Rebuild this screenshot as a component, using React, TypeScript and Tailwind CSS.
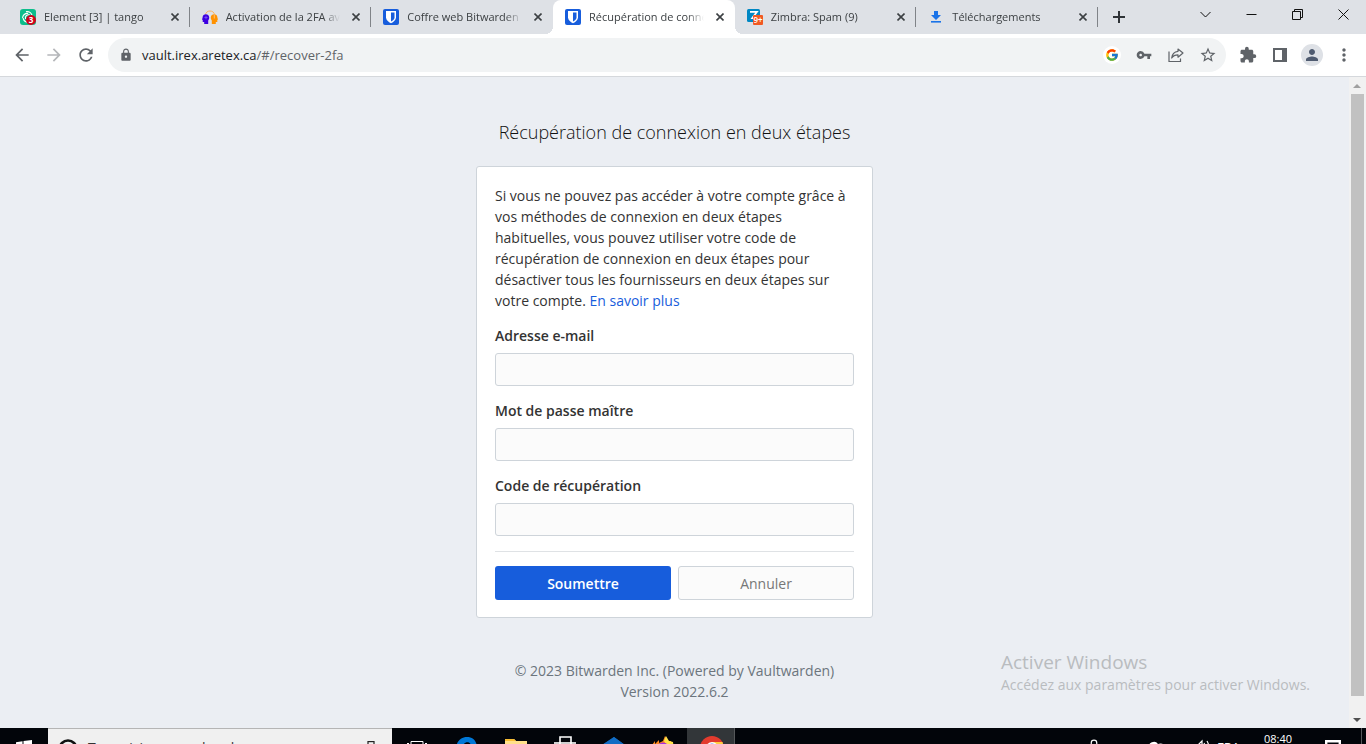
import type { ReactNode } from "react";
import { FcGoogle } from "react-icons/fc";
import {
  MdArrowBack,
  MdArrowForward,
  MdExtension,
  MdLock,
  MdMoreVert,
  MdPerson,
  MdRefresh,
  MdStarBorder,
  MdVpnKey,
} from "react-icons/md";

function ElementIcon() {
  return (
    <svg viewBox="0 0 16 16" className="size-4 shrink-0">
      <rect width="16" height="16" rx="3" fill="#0dbd8b" />
      <g fill="none" stroke="#fff" strokeWidth="1.2" strokeLinecap="round">
        <path d="M6.5 2.600a5.200 5.200 0 0 1 5.700 4.400" />
        <path d="M2.600 8.500a5.200 5.200 0 0 1 5-4.200" />
        <path d="M8 13.200a5.200 5.200 0 0 1-4.800-3.700" />
        <path d="M5.500 9.500a3 3 0 0 1 3.800-3.600" />
      </g>
      <circle cx="11" cy="11" r="5" fill="#d0021b" />
      <text x="11" y="14" textAnchor="middle" fontSize="8" fontWeight="700" fill="#fff" fontFamily="Open Sans">
        3
      </text>
    </svg>
  );
}

function HeadsIcon() {
  return (
    <svg viewBox="0 0 16 16" className="size-4 shrink-0">
      <path d="M3.500 5.600C4 0.800 12 0.800 12.500 5.600" fill="none" stroke="#ffb45c" strokeWidth="1" />
      <path d="M0.600 8.400C.6 4.300 7 4.300 7.200 8.200c.1 1.800-.6 2.600-1 3.200V15H2.200v-2H.7v-2.200H0Z" fill="#3d00e0" />
      <path d="M15.400 8.400C15.400 4.300 9 4.300 8.800 8.200c-.1 1.800.6 2.600 1 3.200V15h4v-2h1.500v-2.200h.7Z" fill="#ff9100" />
      <path d="M4 6.800v3.400M2.400 8.500h3.200" stroke="#7d5cf5" strokeWidth=".8" />
      <path d="M12.300 5.500v4" stroke="#ffc070" strokeWidth="1" />
    </svg>
  );
}

function BitwardenIcon() {
  return (
    <svg viewBox="0 0 16 16" className="size-4 shrink-0">
      <rect width="16" height="16" rx="2" fill="#175ddc" />
      <path d="M3 2h10v6.500c0 2.600-2.400 4.400-5 5.700-2.600-1.300-5-3.100-5-5.700Z" fill="#fff" />
      <path d="M8 3.500h3.500v5c0 1.600-1.500 2.900-3.500 4Z" fill="#175ddc" />
    </svg>
  );
}

function ZimbraIcon() {
  return (
    <svg viewBox="0 0 16 16" className="size-4 shrink-0">
      <rect width="13" height="13" rx="1.500" fill="#0087c3" />
      <path d="M3 2.800h7L5.200 9.200H8" fill="none" stroke="#fff" strokeWidth="1.700" />
      <rect x="6" y="6" width="10" height="10" rx="1" fill="#f15922" />
      <text x="11" y="14" textAnchor="middle" fontSize="8" fontWeight="600" fill="#fff" fontFamily="Open Sans">
        9+
      </text>
    </svg>
  );
}

function DownloadIcon() {
  return (
    <svg viewBox="0 0 16 16" className="size-4 shrink-0" fill="#1a73e8">
      <path d="M6 2h4v4h3L8 11 3 6h3Z" />
      <rect x="3" y="12" width="10" height="1.600" />
    </svg>
  );
}

type TabInfo = { title: string; icon: ReactNode; active?: boolean; divider?: boolean };

const tabs: TabInfo[] = [
  { title: "Element [3] | tango", icon: <ElementIcon />, divider: true },
  { title: "Activation de la 2FA avec", icon: <HeadsIcon />, divider: true },
  { title: "Coffre web Bitwarden", icon: <BitwardenIcon /> },
  { title: "Récupération de connexion", icon: <BitwardenIcon />, active: true },
  { title: "Zimbra: Spam (9)", icon: <ZimbraIcon />, divider: true },
  { title: "Téléchargements", icon: <DownloadIcon />, divider: true },
];

function Tab({ title, icon, active, divider }: TabInfo) {
  return (
    <div className={`relative flex h-full min-w-0 items-center pl-3 ${active ? "rounded-t-lg bg-white" : ""}`}>
      {active && (
        <>
          <span className="absolute bottom-0 -left-2 size-2 bg-[radial-gradient(circle_at_0_0,#dee1e6_8px,#fff_8px)]" />
          <span className="absolute -right-2 bottom-0 size-2 bg-[radial-gradient(circle_at_100%_0,#dee1e6_8px,#fff_8px)]" />
        </>
      )}
      {icon}
      <span className="mx-2 flex-1 overflow-hidden whitespace-nowrap [mask-image:linear-gradient(to_right,#000_85%,transparent)]">
        {title}
      </span>
      <button type="button" aria-label="Fermer l’onglet" className="flex size-4 shrink-0 items-center justify-center">
        <svg viewBox="0 0 8 8" className="size-2" stroke="#3c4043" strokeWidth="1.600">
          <path d="M.5.5l7 7M7.500.5l-7 7" />
        </svg>
      </button>
      <span className={`ml-1.5 h-5 w-px ${divider ? "bg-[#808388]" : ""}`} />
    </div>
  );
}

function WindowButton({ label, children }: { label: string; children: ReactNode }) {
  return (
    <button type="button" aria-label={label} className="flex h-7 w-[46px] items-center justify-center">
      <svg viewBox="0 0 11 11" className="size-[11px]" fill="none" stroke="#111" strokeWidth="1">
        {children}
      </svg>
    </button>
  );
}

function ToolButton({ label, children }: { label: string; children: ReactNode }) {
  return (
    <button type="button" aria-label={label} className="flex size-8 shrink-0 items-center justify-center text-[#5f6368]">
      {children}
    </button>
  );
}

function Field({ id, label, type }: { id: string; label: string; type: string }) {
  return (
    <div className="mb-3.5">
      <label htmlFor={id} className="mb-[7px] block font-semibold">
        {label}
      </label>
      <input
        id={id}
        type={type}
        className="block h-[33px] w-full rounded-[3px] border border-[#ced4da] bg-[#fbfbfb] px-3 outline-none"
      />
    </div>
  );
}

function TaskSlot({ active, children }: { active?: boolean; children: ReactNode }) {
  return (
    <div className={`flex h-10 w-12 shrink-0 items-center justify-center ${active ? "border-r border-[#55585a] bg-[#323639]" : ""}`}>
      <svg viewBox="0 0 24 24" className="size-6">
        {children}
      </svg>
    </div>
  );
}

export default function App() {
  return (
    <div className="flex min-h-screen flex-col bg-[#ebeef3] font-['Open_Sans',sans-serif] text-sm/[21px] text-[#333]">
      <header>
        <div className="flex h-[34px] bg-[#dee1e6] text-[11px]/[18px] text-[#3c4043]">
          <div className="ml-2 grid w-[1090px] min-w-0 grid-cols-6">
            {tabs.map((tab) => (
              <Tab key={tab.title} {...tab} />
            ))}
          </div>
          <button type="button" aria-label="Nouvel onglet" className="ml-[15px] flex h-full items-center">
            <svg viewBox="0 0 12 12" className="size-3" stroke="#2f3337" strokeWidth="2">
              <path d="M6 0v12M0 6h12" />
            </svg>
          </button>
          <div className="ml-auto flex">
            <WindowButton label="Rechercher des onglets">
              <path d="M.5 3l5 5 5-5" />
            </WindowButton>
            <WindowButton label="Réduire">
              <path d="M.5 5.500h10" />
            </WindowButton>
            <WindowButton label="Restaurer">
              <path d="M.5 2.500h8v8h-8ZM2.500 2.500v-2h8v8h-2" />
            </WindowButton>
            <WindowButton label="Fermer">
              <path d="M.5.5l10 10M10.500.5l-10 10" />
            </WindowButton>
          </div>
        </div>

        <div className="flex h-[43px] items-center border-b border-[#d5d8dc] bg-white px-1.5">
          <ToolButton label="Précédent">
            <MdArrowBack className="size-5" />
          </ToolButton>
          <ToolButton label="Suivant">
            <MdArrowForward className="size-5 text-[#b5b7ba]" />
          </ToolButton>
          <ToolButton label="Actualiser">
            <MdRefresh className="size-5" />
          </ToolButton>
          <div className="mx-1.5 flex h-[34px] flex-1 items-center rounded-full bg-[#f1f3f4] pr-0.5 pl-2.5">
            <MdLock className="size-4 p-px text-[#5f6368]" />
            <a href="#/recover-2fa" className="ml-2 flex-1 text-[13px] text-[#5f6368]">
              <span className="text-[#202124]">vault.irex.aretex.ca</span>/#/recover-2fa
            </a>
            <ToolButton label="Google">
              <span className="rounded-full bg-white p-0.5">
                <FcGoogle className="size-3.5" />
              </span>
            </ToolButton>
            <ToolButton label="Mots de passe">
              <MdVpnKey className="size-4" />
            </ToolButton>
            <ToolButton label="Partager">
              <svg viewBox="0 0 16 16" className="size-4" fill="none" stroke="currentColor" strokeWidth="1.200">
                <path d="M1 4.500v10h11.500v-3" />
                <path d="M10 2l5 4-5 4.200V7.800c-3 0-5 1-6.300 3.200.4-3.700 2.500-6.300 6.300-6.700Z" strokeLinejoin="round" />
              </svg>
            </ToolButton>
            <ToolButton label="Ajouter aux favoris">
              <MdStarBorder className="size-[18px]" />
            </ToolButton>
          </div>
          <ToolButton label="Extensions">
            <MdExtension className="size-[18px]" />
          </ToolButton>
          <ToolButton label="Panneau latéral">
            <svg viewBox="0 0 14 14" className="size-3.5" fill="none" stroke="currentColor" strokeWidth="2">
              <rect x="1" y="1" width="12" height="12" />
              <path d="M11 1v12" strokeWidth="4" />
            </svg>
          </ToolButton>
          <ToolButton label="Profil">
            <span className="rounded-full bg-[#dee1e6] p-0.5">
              <MdPerson className="size-[18px] text-[#4f5b70]" />
            </span>
          </ToolButton>
          <ToolButton label="Menu">
            <MdMoreVert className="size-5" />
          </ToolButton>
        </div>
      </header>

      <div className="relative flex flex-1">
        <main className="flex flex-1 flex-col items-center pt-[42px]">
          <h1 className="mb-5 text-lg/[27px] font-light text-[#111]">Récupération de connexion en deux étapes</h1>
          <form className="w-[397px] rounded-[3px] border border-[#ced4da] bg-white p-[18px] pb-[17px]">
            <p className="mb-3.5">
              Si vous ne pouvez pas accéder à votre compte grâce à vos méthodes de connexion en deux étapes habituelles,
              vous pouvez utiliser votre code de récupération de connexion en deux étapes pour désactiver tous les
              fournisseurs en deux étapes sur votre compte.{" "}
              <a href="#/help" className="text-[#175ddc]">
                En savoir plus
              </a>
            </p>
            <Field id="email" label="Adresse e-mail" type="email" />
            <Field id="password" label="Mot de passe maître" type="password" />
            <Field id="code" label="Code de récupération" type="text" />
            <hr className="mt-[15px] mb-3.5 border-[#dfe2e5]" />
            <div className="grid grid-cols-2 gap-[7px]">
              <button type="submit" className="h-[34px] rounded-[3px] bg-[#175ddc] font-semibold text-white">
                Soumettre
              </button>
              <button type="button" className="h-[34px] rounded-[3px] border border-[#ced4da] bg-[#fbfbfb] text-[#777]">
                Annuler
              </button>
            </div>
          </form>
          <p className="mt-[42px] text-center text-[#6c757d]">
            © 2023 Bitwarden Inc. (Powered by Vaultwarden)
            <br />
            Version 2022.6.2
          </p>
        </main>

        <div className="flex w-[17px] flex-col items-center bg-[#f1f1f1] pr-px">
          <svg viewBox="0 0 8 17" className="h-[17px] w-2" fill="#a0a0a0">
            <path d="M4 7l4 4H0Z" />
          </svg>
          <div className="w-[13px] flex-1 bg-[#c1c1c1]" />
          <div className="h-[15px]" />
          <svg viewBox="0 0 8 17" className="h-[17px] w-2" fill="#505050">
            <path d="M4 11L0 7h8Z" />
          </svg>
        </div>

        <div className="pointer-events-none absolute right-[56px] bottom-8 text-[#b9bcbf]">
          <div className="text-[19px]/6">Activer Windows</div>
          <div className="text-sm/[22px]">Accédez aux paramètres pour activer Windows.</div>
        </div>
      </div>

      <footer className="h-4 overflow-hidden bg-[#02050a] text-white">
        <div className="flex h-10">
          <div className="flex w-12 shrink-0 items-center justify-center">
            <svg viewBox="0 0 16 16" className="size-4" fill="#fff">
              <path d="M0 2.200L6.500 1.300V7.500H0ZM7.500 1.100L16 0v7.500H7.500ZM0 8.500h6.500v6.200L0 13.800ZM7.500 8.500H16V16l-8.500-1.100Z" />
            </svg>
          </div>
          <div className="flex w-[344px] shrink-0 items-center border-t border-[#b5b5b5] bg-[#f0f0f0] pr-4 pl-2.5 text-[#333]">
            <svg viewBox="0 0 20 20" className="size-5" fill="none" stroke="#111" strokeWidth="2.600">
              <circle cx="10" cy="10" r="8.500" />
            </svg>
            <span className="ml-2.5 flex-1 pb-0.5">Taper ici pour rechercher</span>
            <svg viewBox="0 0 10 16" className="h-4 w-2.5" fill="none" stroke="#222" strokeWidth="1.200">
              <rect x="2" y=".6" width="6" height="9" />
              <path d="M.6 7v5h8.800V7M5 12v4" />
            </svg>
          </div>
          <div className="ml-px flex gap-px">
            <TaskSlot>
              <path d="M6 5.500h12v13H6ZM2 7.500h2M20 7.500h2M2.500 7v10M21.500 7v10" fill="none" stroke="#fff" />
            </TaskSlot>
            <TaskSlot>
              <path
                d="M2 14C2 5 7 1 13 1c6 0 10 4 10 11v2H9c0 4 7 6 12 3v4C12 26 4 22 5 14c.3-3 2-5 4-6-3 0-5 2-7 6Zm7-4h8c0-5-7-5-8 0Z"
                fill="#0078d7"
              />
            </TaskSlot>
            <TaskSlot>
              <path d="M2 3h9l2 2h11v16H2Z" fill="#ffe08a" />
              <path d="M2 3h9l2 2H2Z" fill="#f7bd34" />
            </TaskSlot>
            <TaskSlot>
              <path d="M2 6h22v16H2Z" fill="#d0d0d0" />
              <path d="M8 8V1h11v7" fill="none" stroke="#fff" strokeWidth="1.600" />
            </TaskSlot>
            <TaskSlot>
              <path d="M13 1l11 8v13H1V9Z" fill="#0f5ea8" />
              <path d="M13 1l11 8-11 8L1 9Z" fill="#116cc4" />
            </TaskSlot>
            <TaskSlot>
              <path d="M2 9l3-4v3l4-4v3l4-2 2-5 3 5h3l2 7v10H2Z" fill="#ff8a1e" />
              <path d="M14 5l2-5 3 5 4 1 1 8-8-6Z" fill="#ffe14a" />
              <circle cx="13" cy="13" r="6.500" fill="#a72de0" />
            </TaskSlot>
            <TaskSlot active>
              <circle cx="13" cy="12" r="12" fill="#e33b2e" />
              <path d="M13 12h12a12 12 0 0 1-12 12Z" fill="#ffcd40" />
              <path d="M1.500 8A12 12 0 0 0 13 24l3-9Z" fill="#1aa260" />
              <path d="M13 6h10.500l1.500 6H13Z" fill="#ffcd40" />
              <circle cx="13" cy="12" r="6" fill="#fff" />
              <circle cx="13" cy="12" r="4.600" fill="#4587f4" />
            </TaskSlot>
          </div>
          <div className="ml-auto flex">
            <svg viewBox="0 0 124 40" className="h-10 w-[124px]" fill="none" stroke="#fff" strokeWidth="1.200">
              <circle cx="7" cy="15" r="2.800" />
              <path d="M2 26c0-8 10-8 10 0" />
              <path d="M60 26a4 4 0 0 1 2-6 5 5 0 0 1 9-4 5 5 0 0 1 5 10Z" fill="#fff" stroke="none" />
              <path d="M108 17h3l4-4v13l-4-4h-3ZM117 15q3 5 0 10M120 13q4 7 0 14" />
            </svg>
            <span className="ml-1.5 w-10 pt-px text-[13px]/9">FRA</span>
            <span className="mt-0.5 w-[42px] text-center text-[11px]/[18px]">08:40</span>
            <svg viewBox="0 0 16 16" className="mt-3 mr-5 ml-[26px] size-4" fill="none" stroke="#fff" strokeWidth="2.400">
              <path d="M1.200 1.200h13.600v10H9l-3 3v-3H1.200Z" />
            </svg>
            <span className="mr-1 w-px bg-[#55585c]" />
          </div>
        </div>
      </footer>
    </div>
  );
}
